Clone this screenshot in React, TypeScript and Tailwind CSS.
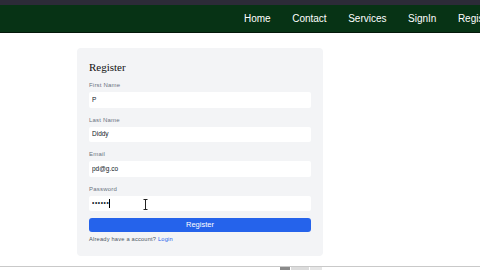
import { useState } from 'react'

const NAV_ITEMS = ['Home', 'Contact', 'Services', 'SignIn', 'Register']

function Field({ label, value, type = 'text', caret = false }: { label: string; value: string; type?: string; caret?: boolean }) {
  return (
    <div className="mb-[8px]">
      <label className="block h-[8px] leading-[8px] text-[6px] text-[#6b7280] tracking-[0.2px] mb-[3px]">{label}</label>
      <div className="relative h-[15.5px] bg-white rounded-[2px] flex items-center px-[3px]">
        <input
          type={type}
          defaultValue={value}
          readOnly
          className={`w-full bg-transparent outline-none text-[6.5px] text-[#111827] leading-[8px] ${type === 'password' ? 'tracking-[0.6px]' : ''}`}
        />
        {caret && (
          <>
            <span className="absolute left-[20px] top-[3.5px] w-[0.7px] h-[8.5px] bg-black" />
            {/* mouse cursor */}
            <svg className="absolute left-[54px] top-[3px]" width="5" height="11" viewBox="0 0 5 11">
              <path d="M0.5 0.5h4M2.5 0.5v10M0.5 10.5h4" stroke="#222" strokeWidth="1" fill="none" />
            </svg>
          </>
        )}
      </div>
    </div>
  )
}

export default function App() {
  const [pw] = useState('pppppp')

  return (
    <div className="w-[480px] h-[270px] overflow-hidden bg-white flex flex-col" style={{ fontFamily: '"Liberation Sans", Arial, sans-serif' }}>
      {/* top strip */}
      <div className="h-[5px] bg-[#2c2b38] shrink-0" />

      {/* Navbar */}
      <nav className="h-[28px] shrink-0 bg-[#073315] border-b border-[#04180a] flex items-center pl-[244px] gap-[21.5px] overflow-hidden whitespace-nowrap">
        {NAV_ITEMS.map((item) => (
          <a key={item} className="text-white text-[10px] leading-none">{item}</a>
        ))}
      </nav>

      {/* Register card */}
      <div className="flex-1">
        <div className="ml-[77px] mt-[15px] w-[246px] bg-[#f3f4f6] rounded-[4px] px-[12px] pt-[12px] pb-[13px]">
          <h1 className="h-[14px] leading-[14px] text-[11px] text-[#111] mb-[7px]" style={{ fontFamily: '"Liberation Serif", "Times New Roman", serif' }}>
            Register
          </h1>
          <Field label="First Name" value="P" />
          <Field label="Last Name" value="Diddy" />
          <Field label="Email" value="pd@g.co" />
          <div className="-mb-[1px]">
            <Field label="Password" value={pw} type="password" caret />
          </div>
          <button className="block w-full h-[14px] bg-[#2563eb] rounded-[3px] text-white text-[7.5px] leading-none mb-[3px]">
            Register
          </button>
          <p className="h-[8px] leading-[8px] text-[5.7px] text-[#4b5563] tracking-[0.2px]">
            Already have a account? <a className="text-[#2563eb]">Login</a>
          </p>
        </div>
      </div>

      {/* bottom bar */}
      <div className="h-[4px] shrink-0 border-t border-[#c9c9c9] flex items-end pl-[280px] gap-[1px]">
        <span className="w-[10px] h-[3px] bg-[#8a8a8a]" />
        <span className="w-[18px] h-[3px] bg-[#dcdcdc]" />
        <span className="w-[12px] h-[3px] bg-[#e6e6e6]" />
      </div>
    </div>
  )
}
